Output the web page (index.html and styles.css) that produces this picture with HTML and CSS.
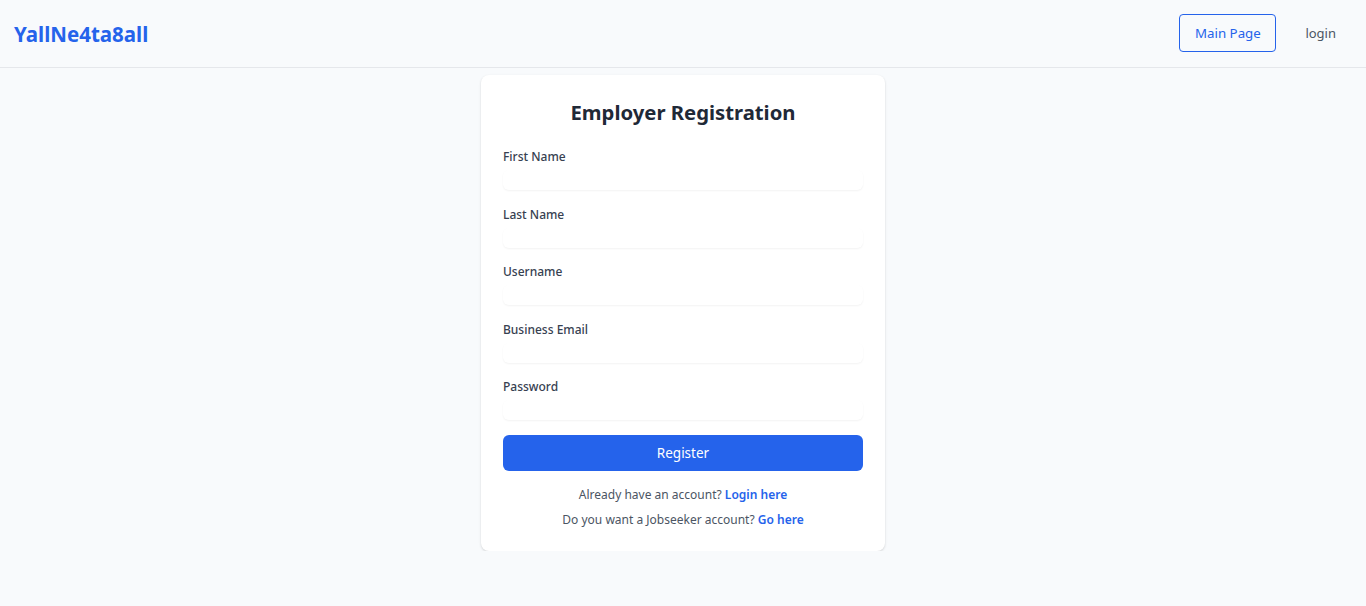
FILE: index.html
```html
<!DOCTYPE html>
<html lang="en">
<head>
<meta charset="utf-8">
<title>Employer Registration</title>
<link rel="stylesheet" href="styles.css">
</head>
<body>
<header class="navbar">
  <a class="brand" href="#">YallNe4ta8all</a>
  <nav class="nav-links">
    <a class="btn-outline" href="#">Main Page</a>
    <a class="nav-link" href="#">login</a>
  </nav>
</header>
<main class="page">
  <form class="card">
    <h1 class="title">Employer Registration</h1>
    <div class="field">
      <label class="label">First Name</label>
      <input class="input" type="text">
    </div>
    <div class="field">
      <label class="label">Last Name</label>
      <input class="input" type="text">
    </div>
    <div class="field">
      <label class="label">Username</label>
      <input class="input" type="text">
    </div>
    <div class="field">
      <label class="label">Business Email</label>
      <input class="input" type="email">
    </div>
    <div class="field">
      <label class="label">Password</label>
      <input class="input" type="password">
    </div>
    <button class="btn-primary" type="button">Register</button>
    <p class="note">Already have an account? <a href="#">Login here</a></p>
    <p class="note">Do you want a Jobseeker account? <a href="#">Go here</a></p>
  </form>
</main>
</body>
</html>
```

FILE: styles.css
```css
* { box-sizing: border-box; }
html, body {
  margin: 0;
  padding: 0;
  background: #f8fafc;
  font-family: "Noto Sans", "Open Sans", sans-serif;
  color: #374151;
}
.navbar {
  height: 68px;
  display: flex;
  align-items: center;
  justify-content: space-between;
  padding: 0 14px;
  border-bottom: 1px solid #e5e7eb;
}
.brand {
  font-size: 20.5px;
  font-weight: 700;
  color: #2563eb;
  text-decoration: none;
}
.nav-links {
  display: flex;
  align-items: center;
  gap: 29px;
  padding-right: 15px;
}
.btn-outline {
  display: flex;
  align-items: center;
  justify-content: center;
  width: 97px;
  height: 38px;
  margin-top: -1px;
  border: 1px solid #2563eb;
  border-radius: 4px;
  color: #2563eb;
  font-size: 13.3px;
  text-decoration: none;
}
.nav-link {
  font-size: 13px;
  color: #4b5563;
  text-decoration: none;
  margin-top: -1px;
  margin-right: 1px;
}
.page {
  display: flex;
  justify-content: center;
  padding-top: 7px;
}
.card {
  width: 404px;
  background: #fff;
  border-radius: 8px;
  box-shadow: 0 1px 3px rgba(0,0,0,0.1), 0 1px 2px rgba(0,0,0,0.06);
  padding: 20px 22px 19px;
  margin: 0;
}
.title {
  margin: 0 0 18px;
  text-align: center;
  font-size: 20.3px;
  font-weight: 700;
  color: #1f2937;
  line-height: 34px;
}
.field {
  display: flex;
  flex-direction: column;
  gap: 3px;
  margin-bottom: 14.5px;
}
.label {
  font-size: 12px;
  font-weight: 500;
  color: #374151;
  line-height: 20px;
}
.input {
  height: 20px;
  border: none;
  border-radius: 6px;
  box-shadow: 0 1px 2px rgba(0,0,0,0.05);
  background: #fff;
  outline: none;
  padding: 0 8px;
}
.btn-primary {
  display: block;
  width: 100%;
  height: 36px;
  margin-top: 0;
  border: none;
  border-radius: 6px;
  background: #2563eb;
  color: #fff;
  font-family: inherit;
  font-size: 13.5px;
  cursor: pointer;
}
.note {
  text-align: center;
  font-size: 12px;
  color: #4b5563;
  margin: 0;
  line-height: 25px;
}
.note:first-of-type { margin-top: 11px; }
.note a {
  color: #2563eb;
  font-weight: 600;
  text-decoration: none;
}
```
